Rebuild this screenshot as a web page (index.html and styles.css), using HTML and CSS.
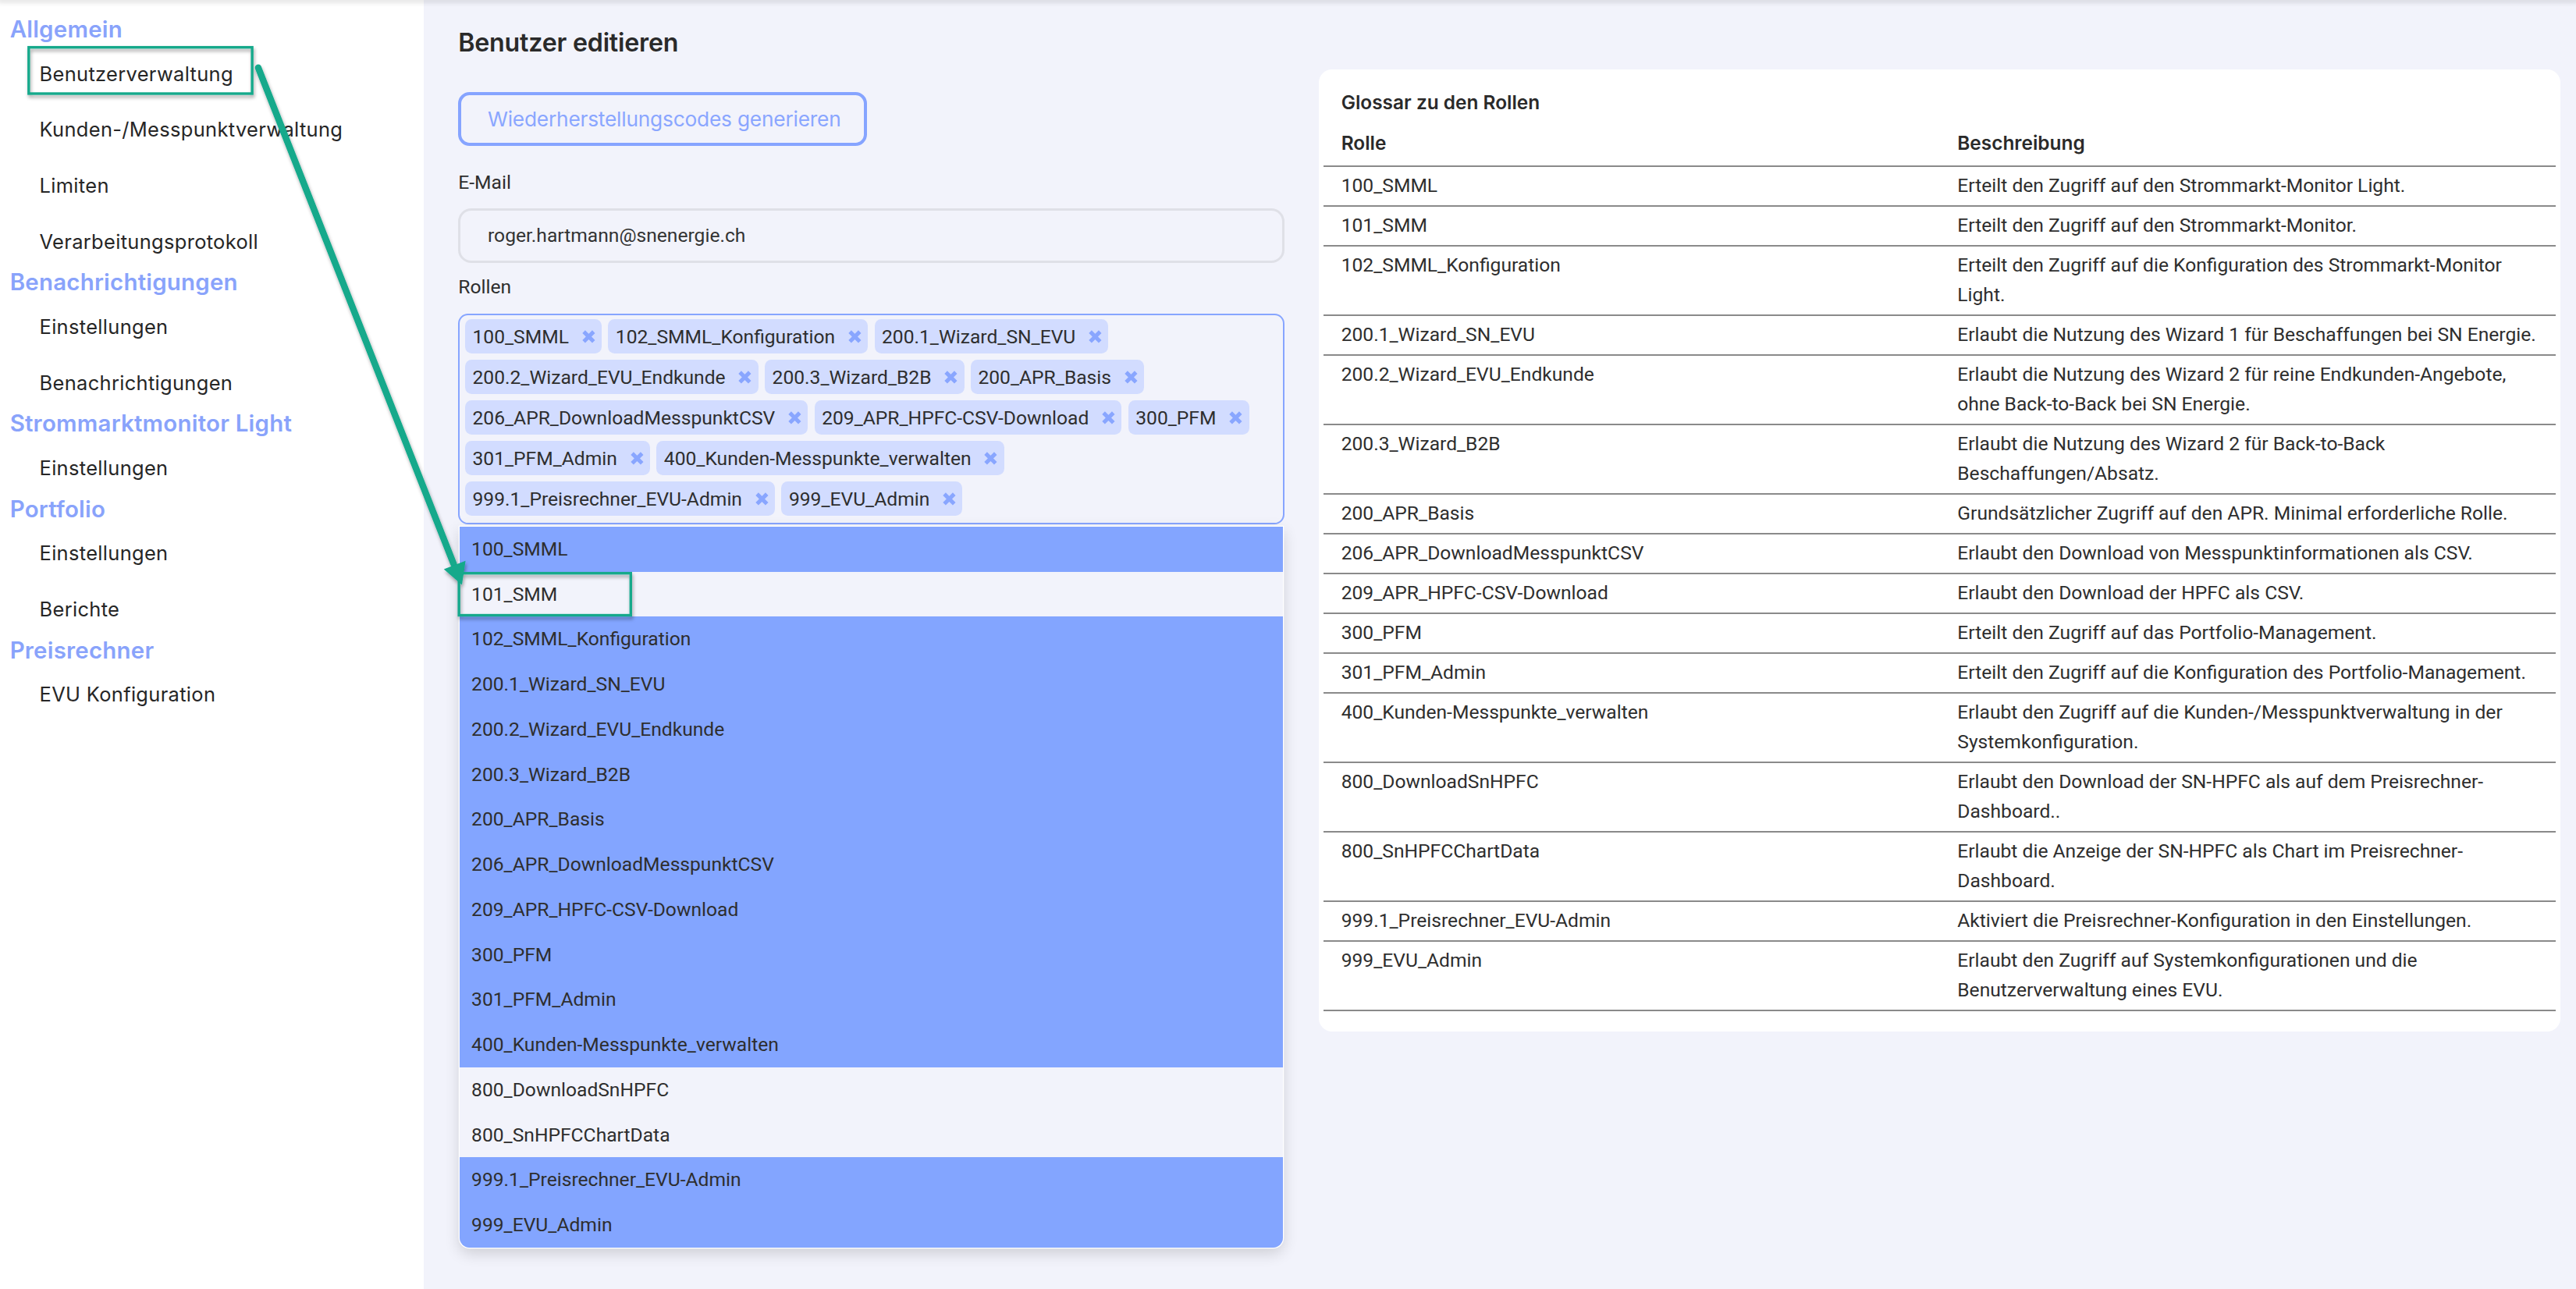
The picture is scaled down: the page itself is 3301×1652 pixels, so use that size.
FILE: index.html
```html
<!DOCTYPE html>
<html lang="de">
<head>
<meta charset="utf-8">
<title>Benutzer editieren</title>
<link rel="stylesheet" href="styles.css">
</head>
<body>
<div class="app">
  <div class="topshade"></div>
  <div class="layout">
    <nav class="sidebar">
      <div class="nav-heading">Allgemein</div>
      <a class="nav-item">Benutzerverwaltung</a>
      <a class="nav-item">Kunden-/Messpunktverwaltung</a>
      <a class="nav-item">Limiten</a>
      <a class="nav-item">Verarbeitungsprotokoll</a>
      <div class="nav-heading">Benachrichtigungen</div>
      <a class="nav-item">Einstellungen</a>
      <a class="nav-item">Benachrichtigungen</a>
      <div class="nav-heading">Strommarktmonitor Light</div>
      <a class="nav-item">Einstellungen</a>
      <div class="nav-heading">Portfolio</div>
      <a class="nav-item">Einstellungen</a>
      <a class="nav-item">Berichte</a>
      <div class="nav-heading">Preisrechner</div>
      <a class="nav-item">EVU Konfiguration</a>
    </nav>

    <main class="main">
      <section class="form-col">
        <h1 class="page-title">Benutzer editieren</h1>
        <button class="btn-outline">Wiederherstellungscodes generieren</button>
        <label class="field-label label-email">E-Mail</label>
        <div class="text-input">roger.hartmann@snenergie.ch</div>
        <label class="field-label label-roles">Rollen</label>
        <div class="tag-box">
          <span class="tag">100_SMML<svg class="tag-x" viewBox="0 0 8 8"><path d="M1 1L7 7M7 1L1 7"/></svg></span>
          <span class="tag">102_SMML_Konfiguration<svg class="tag-x" viewBox="0 0 8 8"><path d="M1 1L7 7M7 1L1 7"/></svg></span>
          <span class="tag">200.1_Wizard_SN_EVU<svg class="tag-x" viewBox="0 0 8 8"><path d="M1 1L7 7M7 1L1 7"/></svg></span>
          <span class="tag">200.2_Wizard_EVU_Endkunde<svg class="tag-x" viewBox="0 0 8 8"><path d="M1 1L7 7M7 1L1 7"/></svg></span>
          <span class="tag">200.3_Wizard_B2B<svg class="tag-x" viewBox="0 0 8 8"><path d="M1 1L7 7M7 1L1 7"/></svg></span>
          <span class="tag">200_APR_Basis<svg class="tag-x" viewBox="0 0 8 8"><path d="M1 1L7 7M7 1L1 7"/></svg></span>
          <span class="tag">206_APR_DownloadMesspunktCSV<svg class="tag-x" viewBox="0 0 8 8"><path d="M1 1L7 7M7 1L1 7"/></svg></span>
          <span class="tag">209_APR_HPFC-CSV-Download<svg class="tag-x" viewBox="0 0 8 8"><path d="M1 1L7 7M7 1L1 7"/></svg></span>
          <span class="tag">300_PFM<svg class="tag-x" viewBox="0 0 8 8"><path d="M1 1L7 7M7 1L1 7"/></svg></span>
          <span class="tag">301_PFM_Admin<svg class="tag-x" viewBox="0 0 8 8"><path d="M1 1L7 7M7 1L1 7"/></svg></span>
          <span class="tag">400_Kunden-Messpunkte_verwalten<svg class="tag-x" viewBox="0 0 8 8"><path d="M1 1L7 7M7 1L1 7"/></svg></span>
          <span class="tag">999.1_Preisrechner_EVU-Admin<svg class="tag-x" viewBox="0 0 8 8"><path d="M1 1L7 7M7 1L1 7"/></svg></span>
          <span class="tag">999_EVU_Admin<svg class="tag-x" viewBox="0 0 8 8"><path d="M1 1L7 7M7 1L1 7"/></svg></span>
        </div>
        <ul class="dropdown">
          <li class="opt sel">100_SMML</li>
          <li class="opt">101_SMM</li>
          <li class="opt sel">102_SMML_Konfiguration</li>
          <li class="opt sel">200.1_Wizard_SN_EVU</li>
          <li class="opt sel">200.2_Wizard_EVU_Endkunde</li>
          <li class="opt sel">200.3_Wizard_B2B</li>
          <li class="opt sel">200_APR_Basis</li>
          <li class="opt sel">206_APR_DownloadMesspunktCSV</li>
          <li class="opt sel">209_APR_HPFC-CSV-Download</li>
          <li class="opt sel">300_PFM</li>
          <li class="opt sel">301_PFM_Admin</li>
          <li class="opt sel">400_Kunden-Messpunkte_verwalten</li>
          <li class="opt">800_DownloadSnHPFC</li>
          <li class="opt">800_SnHPFCChartData</li>
          <li class="opt sel">999.1_Preisrechner_EVU-Admin</li>
          <li class="opt sel">999_EVU_Admin</li>
        </ul>
      </section>

      <section class="card">
        <h2 class="card-title">Glossar zu den Rollen</h2>
        <table class="glossary">
          <colgroup><col class="c1"><col class="c2"></colgroup>
          <thead>
            <tr><th>Rolle</th><th>Beschreibung</th></tr>
          </thead>
          <tbody>
            <tr><td>100_SMML</td><td>Erteilt den Zugriff auf den Strommarkt-Monitor Light.</td></tr>
            <tr><td>101_SMM</td><td>Erteilt den Zugriff auf den Strommarkt-Monitor.</td></tr>
            <tr><td>102_SMML_Konfiguration</td><td>Erteilt den Zugriff auf die Konfiguration des Strommarkt-Monitor<br>Light.</td></tr>
            <tr><td>200.1_Wizard_SN_EVU</td><td>Erlaubt die Nutzung des Wizard 1 für Beschaffungen bei SN Energie.</td></tr>
            <tr><td>200.2_Wizard_EVU_Endkunde</td><td>Erlaubt die Nutzung des Wizard 2 für reine Endkunden-Angebote,<br>ohne Back-to-Back bei SN Energie.</td></tr>
            <tr><td>200.3_Wizard_B2B</td><td>Erlaubt die Nutzung des Wizard 2 für Back-to-Back<br>Beschaffungen/Absatz.</td></tr>
            <tr><td>200_APR_Basis</td><td>Grundsätzlicher Zugriff auf den APR. Minimal erforderliche Rolle.</td></tr>
            <tr><td>206_APR_DownloadMesspunktCSV</td><td>Erlaubt den Download von Messpunktinformationen als CSV.</td></tr>
            <tr><td>209_APR_HPFC-CSV-Download</td><td>Erlaubt den Download der HPFC als CSV.</td></tr>
            <tr><td>300_PFM</td><td>Erteilt den Zugriff auf das Portfolio-Management.</td></tr>
            <tr><td>301_PFM_Admin</td><td>Erteilt den Zugriff auf die Konfiguration des Portfolio-Management.</td></tr>
            <tr><td>400_Kunden-Messpunkte_verwalten</td><td>Erlaubt den Zugriff auf die Kunden-/Messpunktverwaltung in der<br>Systemkonfiguration.</td></tr>
            <tr><td>800_DownloadSnHPFC</td><td>Erlaubt den Download der SN-HPFC als auf dem Preisrechner-<br>Dashboard..</td></tr>
            <tr><td>800_SnHPFCChartData</td><td>Erlaubt die Anzeige der SN-HPFC als Chart im Preisrechner-<br>Dashboard.</td></tr>
            <tr><td>999.1_Preisrechner_EVU-Admin</td><td>Aktiviert die Preisrechner-Konfiguration in den Einstellungen.</td></tr>
            <tr><td>999_EVU_Admin</td><td>Erlaubt den Zugriff auf Systemkonfigurationen und die<br>Benutzerverwaltung eines EVU.</td></tr>
          </tbody>
        </table>
      </section>
    </main>
  </div>

  <svg class="annotations" viewBox="0 0 1568 785" aria-hidden="true">
    <defs>
      <filter id="shadow" x="-20%" y="-20%" width="140%" height="140%">
        <feDropShadow dx="0.6" dy="1.6" stdDeviation="1.1" flood-color="#000" flood-opacity="0.35"/>
      </filter>
    </defs>
    <g filter="url(#shadow)" fill="none" stroke="#12a98b">
      <rect x="17.5" y="28.8" width="136" height="28.2" stroke-width="1.6"/>
      <rect x="279.4" y="349" width="104.6" height="25.6" stroke-width="1.6"/>
      <line x1="157.2" y1="41.2" x2="276.2" y2="343.5" stroke-width="4" stroke-linecap="round"/>
      <polygon points="281.2,356 270.2,346.6 283.4,341.4" fill="#12a98b" stroke="none"/>
    </g>
  </svg>
</div>
</body>
</html>
```

FILE: styles.css
```css
html {
  zoom: 2.105;
}
body {
  margin: 0;
  background: #f2f3fb;
  color: #2e2e2e;
  font-family: Roboto, "Liberation Sans", Arial, sans-serif;
  font-size: 11.7px;
}
.app {
  position: relative;
  width: 1568px;
  height: 785px;
  overflow: hidden;
  background: #f2f3fb;
}
.topshade {
  position: relative;
  z-index: 2;
  height: 0;
  box-shadow: 0 0 3px 1.5px rgba(0, 0, 0, 0.12);
}
.layout {
  display: flex;
  height: 785px;
}

/* sidebar */
.sidebar {
  width: 258px;
  flex: none;
  background: #ffffff;
  display: flex;
  flex-direction: column;
  padding-top: 9px;
  box-sizing: border-box;
}
.nav-heading {
  font-family: Inter, "Open Sans", sans-serif;
  font-weight: 600;
  font-size: 14px;
  line-height: 18px;
  height: 18px;
  color: #89a3fb;
  padding-left: 6px;
  letter-spacing: 0.1px;
}
.nav-item {
  font-family: Inter, "Open Sans", sans-serif;
  font-size: 12.1px;
  line-height: 34px;
  height: 34px;
  padding-top: 1px;
  box-sizing: border-box;
  color: #262626;
  padding-left: 24px;
  letter-spacing: 0.15px;
}

/* main */
.main {
  flex: 1;
  display: grid;
  grid-template-columns: 503px 1fr;
  column-gap: 21px;
  padding: 15px 9.3px 0 21px;
  align-items: start;
}
.form-col {
  display: flex;
  flex-direction: column;
}
.page-title {
  margin: 0;
  font-family: Inter, "Open Sans", sans-serif;
  font-weight: 600;
  font-size: 15.3px;
  line-height: 22px;
  color: #2a2a2a;
  letter-spacing: -0.1px;
}
.btn-outline {
  align-self: flex-start;
  margin-top: 19px;
  height: 33px;
  width: 249px;
  box-sizing: border-box;
  border: 2px solid #86a4ff;
  border-radius: 7px;
  background: transparent;
  color: #8aa6ff;
  font-family: Inter, "Open Sans", sans-serif;
  font-size: 12.5px;
  text-align: left;
  padding: 0 0 0 16px;
  letter-spacing: -0.1px;
}
.field-label {
  display: block;
  line-height: 16px;
  color: #2e2e2e;
}
.label-email {
  margin-top: 14px;
}
.label-roles {
  margin-top: 7px;
}
.text-input {
  margin-top: 8px;
  height: 33px;
  box-sizing: border-box;
  border: 1.5px solid #dfe0e7;
  border-radius: 8px;
  padding-left: 16.5px;
  line-height: 30px;
  color: #333;
}
.tag-box {
  margin-top: 8px;
  border: 1px solid #87a5ff;
  border-radius: 6px;
  padding: 2.5px 3px 4px 3.2px;
  display: flex;
  flex-wrap: wrap;
  gap: 3.7px 4px;
}
.tag {
  display: inline-flex;
  align-items: center;
  height: 21px;
  background: #d2dcff;
  border-radius: 4px;
  padding: 0 4px 0 4.5px;
  color: #2e2e2e;
  white-space: nowrap;
}
.tag-x {
  width: 8px;
  height: 8px;
  margin-left: 8px;
  stroke: #89a6ff;
  stroke-width: 2.4;
  fill: none;
}
.dropdown {
  list-style: none;
  margin: 1.5px 1px 0 1px;
  padding: 0;
  border-radius: 0 0 6px 6px;
  overflow: hidden;
  box-shadow: 0 0 0 0.6px #ffffff, 0 3px 9px rgba(0, 0, 0, 0.16);
}
.opt {
  height: 27.44px;
  line-height: 27.44px;
  padding-left: 7px;
  background: #f2f3fb;
  color: #2e2e2e;
}
.opt.sel {
  background: #83a5ff;
}

/* glossary card */
.card {
  margin-top: 27.3px;
  background: #ffffff;
  border-radius: 8px;
  padding: 11.5px 3px 12.5px 2.5px;
}
.card-title {
  margin: 0 0 2.2px 0;
  padding-left: 11px;
  font-family: Inter, "Open Sans", sans-serif;
  font-weight: 600;
  font-size: 11.6px;
  line-height: 18px;
  color: #2a2a2a;
}
.glossary {
  width: 100%;
  border-collapse: collapse;
  table-layout: fixed;
}
.glossary col.c1,
.glossary col.c2 {
  width: 50%;
}
.glossary th {
  text-align: left;
  font-family: Inter, "Open Sans", sans-serif;
  font-weight: 600;
  font-size: 11.6px;
  line-height: 18px;
  padding: 4.3px 11px;
  border-bottom: 1px solid #8a8a8a;
  color: #2a2a2a;
}
.glossary td {
  vertical-align: top;
  line-height: 18px;
  padding: 2.65px 2px 2.65px 11px;
  border-bottom: 1px solid #8a8a8a;
  color: #2e2e2e;
}

/* annotations overlay */
.annotations {
  position: absolute;
  left: 0;
  top: 0;
  width: 1568px;
  height: 785px;
  pointer-events: none;
}
```
